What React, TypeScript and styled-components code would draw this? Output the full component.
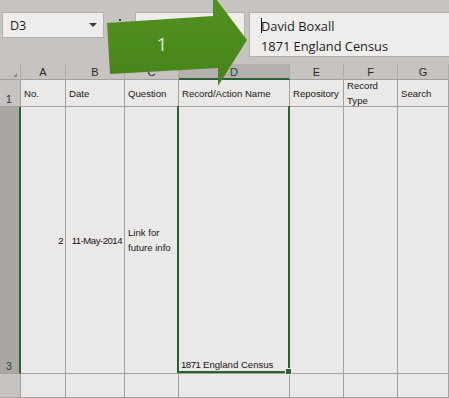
import React from "react";
import styled, { createGlobalStyle } from "styled-components";

const Global = createGlobalStyle`
  html, body { margin: 0; padding: 0; background: #c6c3c0; overflow: hidden; }
  * { box-sizing: border-box; }
`;

const GREEN = "#2b6138";
const GRID = "#a3a09d";

const Frame = styled.div`
  position: relative;
  width: 449px;
  height: 398px;
  overflow: hidden;
  background: #c6c3c0;
  display: flex;
  flex-direction: column;
`;

const TopBar = styled.div`
  height: 64px;
  flex: none;
  display: flex;
  align-items: flex-start;
  padding: 12px 0 0 2px;
`;

const NameBox = styled.div`
  width: 102px;
  height: 26px;
  background: #eeedeb;
  border: 1px solid #b3b0ad;
  display: flex;
  align-items: center;
  justify-content: space-between;
  padding: 0 6px 0 7px;
  font-family: "Open Sans", "Liberation Sans", sans-serif;
  font-size: 12.5px;
  color: #1c1c1c;
`;

const Caret = styled.span`
  width: 0;
  height: 0;
  border-left: 4px solid transparent;
  border-right: 4px solid transparent;
  border-top: 4px solid #3a3a3a;
`;

const Sep = styled.div`
  width: 31px;
  height: 26px;
  display: flex;
  flex-direction: column;
  align-items: center;
  gap: 3px;
  padding-top: 7px;
`;

const Dot = styled.span`
  width: 2px;
  height: 2px;
  background: #3a3a3a;
`;

const FxBox = styled.div`
  width: 110px;
  height: 26px;
  background: #eeedeb;
  border: 1px solid #b3b0ad;
  display: flex;
  align-items: center;
  gap: 14px;
  padding-left: 12px;
  font-family: "Liberation Serif", serif;
  font-style: italic;
  font-size: 13px;
  color: #333;
`;

const FormulaBox = styled.div`
  flex: 1;
  margin-left: 4px;
  height: 45px;
  background: #eeedeb;
  border: 1px solid #b3b0ad;
  border-right: none;
  padding: 3px 0 0 11px;
  font-family: "Open Sans", "Noto Sans", sans-serif;
  font-size: 12.8px;
  line-height: 20px;
  color: #1c1c1c;
`;

const Line = styled.div<{ $cursor?: boolean }>`
  position: relative;
  white-space: nowrap;
  ${(p) =>
    p.$cursor
      ? `&::before { content: ""; position: absolute; left: 0; top: 2px; width: 1px; height: 15px; background: #111; }`
      : ""}
`;

const Sheet = styled.div`
  flex: 1;
  display: grid;
  grid-template-columns: 21px 45px 59px 54px 111px 54px 54px 1fr;
  grid-template-rows: 16px 27px 267px 1fr;
  font-family: "Liberation Sans", Arial, sans-serif;
`;

const Corner = styled.div`
  background: #c6c3c0;
  border-right: 1px solid #b0adaa;
  border-bottom: 1px solid ${GRID};
  display: flex;
  align-items: flex-end;
  justify-content: flex-end;
  padding: 0 3px 2px 0;
`;

const CornerTri = styled.span`
  width: 0;
  height: 0;
  border-left: 4px solid transparent;
  border-bottom: 4px solid #8d8a87;
`;

const ColHead = styled.div<{ $sel?: boolean }>`
  background: ${(p) => (p.$sel ? "#b4b0ad" : "#c6c3c0")};
  border-right: 1px solid #aeaba8;
  border-bottom: ${(p) => (p.$sel ? `2px solid ${GREEN}` : `1px solid ${GRID}`)};
  display: flex;
  align-items: flex-end;
  justify-content: center;
  padding-bottom: ${(p) => (p.$sel ? "0px" : "1px")};
  font-size: 11px;
  line-height: 11px;
  color: ${(p) => (p.$sel ? "#24452d" : "#2a2a2a")};
`;

const RowHead = styled.div<{ $sel?: boolean }>`
  background: ${(p) => (p.$sel ? "#aaa6a3" : "#c6c3c0")};
  border-right: ${(p) => (p.$sel ? `2px solid ${GREEN}` : `1px solid ${GRID}`)};
  border-bottom: 1px solid ${GRID};
  display: flex;
  align-items: flex-end;
  justify-content: center;
  padding: 0 ${(p) => (p.$sel ? "1px" : "2px")} 1px 0;
  font-size: 10.5px;
  line-height: 12px;
  color: ${(p) => (p.$sel ? "#24452d" : "#2a2a2a")};
`;

const Cell = styled.div<{ $align?: "left" | "right"; $valign?: "center" | "end" }>`
  position: relative;
  background: #ebe9e7;
  border-right: 1px solid ${GRID};
  border-bottom: 1px solid ${GRID};
  display: flex;
  flex-direction: column;
  justify-content: ${(p) => (p.$valign === "end" ? "flex-end" : "center")};
  align-items: ${(p) => (p.$align === "right" ? "flex-end" : "flex-start")};
  padding: 1px 2px 1px 3px;
  font-size: 9.6px;
  line-height: 15px;
  color: #161616;
  white-space: nowrap;
`;

const Num = styled.span`
  letter-spacing: -0.5px;
`;

const Selected = styled(Cell)`
  padding-left: 2px;
  padding-bottom: 1px;
  &::after {
    content: "";
    position: absolute;
    z-index: 2;
    left: -2px;
    top: -1px;
    right: -1px;
    bottom: 0;
    border: 2px solid ${GREEN};
    border-top: none;
  }
  &::before {
    content: "";
    position: absolute;
    z-index: 3;
    right: -3px;
    bottom: -2px;
    width: 5px;
    height: 5px;
    background: ${GREEN};
    border: 1px solid #ebe9e7;
  }
`;

const Arrow = styled.svg`
  position: absolute;
  left: 0;
  top: 0;
  pointer-events: none;
`;

const ArrowLabel = styled.text`
  font-family: "Open Sans", "Liberation Sans", sans-serif;
  font-size: 19px;
  fill: #dbe7d0;
`;

const cols = ["A", "B", "C", "D", "E", "F", "G"];

export default function App() {
  return (
    <>
      <Global />
      <Frame>
        <TopBar>
          <NameBox>
            D3
            <Caret />
          </NameBox>
          <Sep>
            <Dot />
            <Dot />
            <Dot />
          </Sep>
          <FxBox>
            <span>✕</span>
            <span>✓</span>
            <span>fx</span>
          </FxBox>
          <FormulaBox>
            <Line $cursor>David Boxall</Line>
            <Line>1871 England Census</Line>
          </FormulaBox>
        </TopBar>
        <Sheet>
          <Corner>
            <CornerTri />
          </Corner>
          {cols.map((c) => (
            <ColHead key={c} $sel={c === "D"}>
              {c}
            </ColHead>
          ))}

          <RowHead>1</RowHead>
          <Cell>No.</Cell>
          <Cell>Date</Cell>
          <Cell>Question</Cell>
          <Cell>Record/Action Name</Cell>
          <Cell>Repository</Cell>
          <Cell>
            <span>Record</span>
            <span>Type</span>
          </Cell>
          <Cell>Search</Cell>

          <RowHead $sel>3</RowHead>
          <Cell $align="right">
            <Num>2</Num>
          </Cell>
          <Cell $align="right">
            <Num>11-May-2014</Num>
          </Cell>
          <Cell>
            <span>Link for</span>
            <span>future info</span>
          </Cell>
          <Selected $valign="end">
            <span>
              <Num>1871</Num> England Census
            </span>
          </Selected>
          <Cell />
          <Cell />
          <Cell />

          <RowHead />
          <Cell />
          <Cell />
          <Cell />
          <Cell />
          <Cell />
          <Cell />
          <Cell />
        </Sheet>
        <Arrow width="449" height="100" viewBox="0 0 449 100">
          <defs>
            <linearGradient id="ag" x1="0" y1="0" x2="0" y2="1">
              <stop offset="0" stopColor="#52921f" />
              <stop offset="1" stopColor="#46841b" />
            </linearGradient>
          </defs>
          <polygon
            points="107,23 213,16 213,-5 247,40 218,86 218,68 110,74"
            fill="url(#ag)"
          />
          <ArrowLabel x="162" y="51" textAnchor="middle">
            1
          </ArrowLabel>
        </Arrow>
      </Frame>
    </>
  );
}
